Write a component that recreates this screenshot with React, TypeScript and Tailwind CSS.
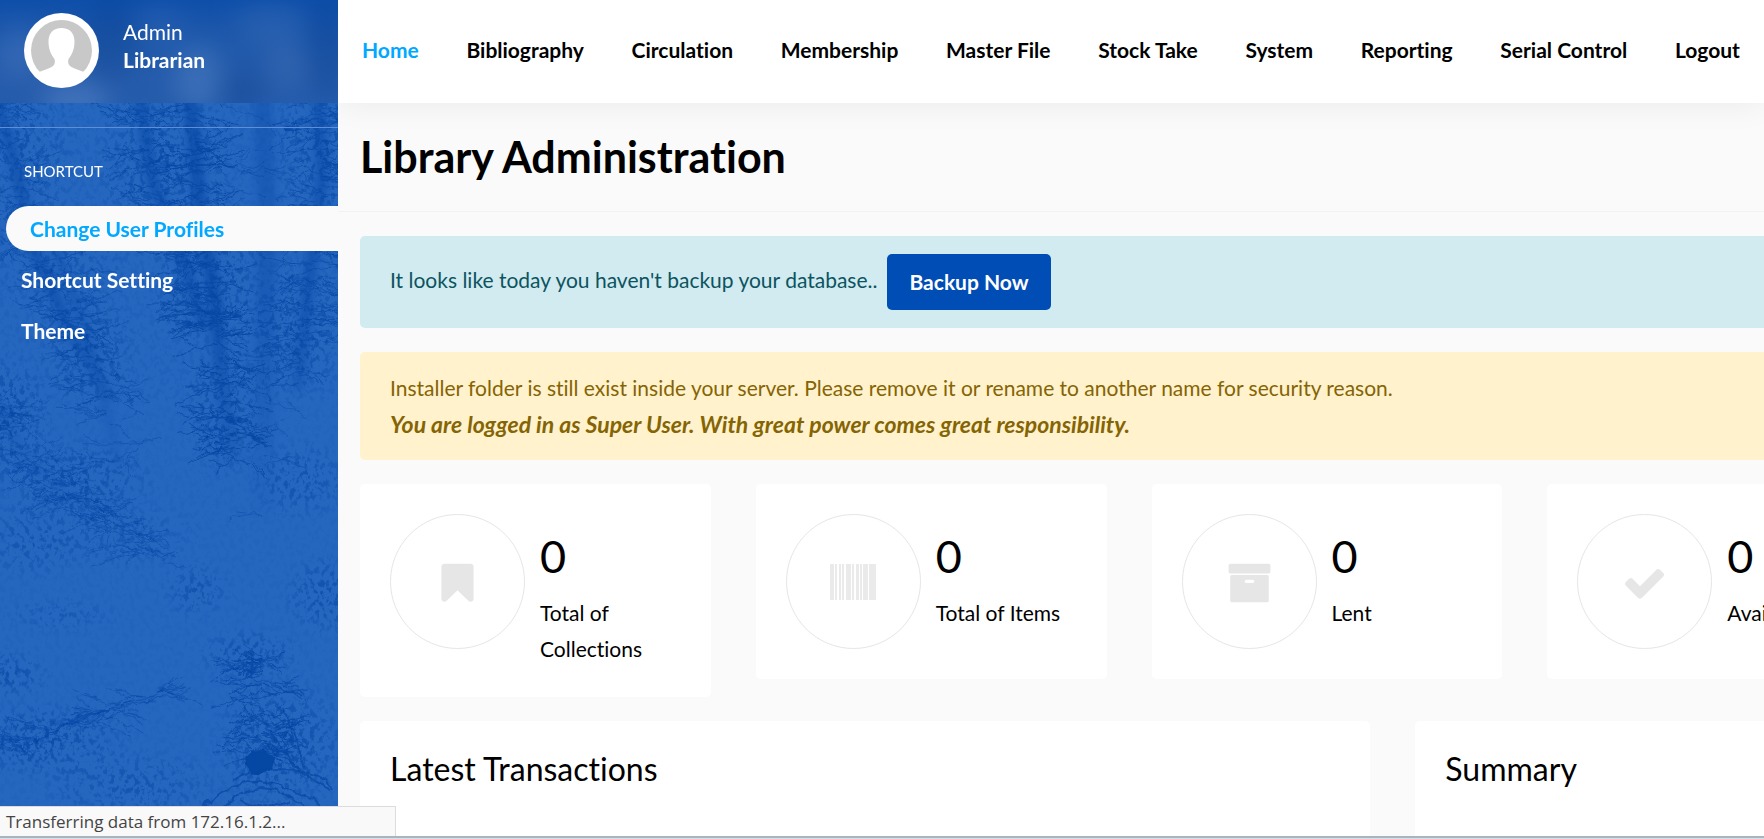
import React from "react";

type Point = [number, number];

function createRandom(seed: number) {
  let state = seed;
  return () => {
    state = (state * 1664525 + 1013904223) % 4294967296;
    return state / 4294967296;
  };
}

const random = createRandom(41);

const trunks: { points: Point[]; width: number; opacity: number; twigs: number }[] = [
  { points: [[-6, 90], [14, 160], [34, 250], [70, 330], [110, 400]], width: 12, opacity: 0.5, twigs: 60 },
  { points: [[40, 210], [75, 300], [95, 360], [120, 470]], width: 8, opacity: 0.4, twigs: 60 },
  { points: [[140, 95], [152, 180], [180, 250], [205, 330]], width: 12, opacity: 0.55, twigs: 70 },
  { points: [[190, 95], [200, 210], [215, 300], [222, 390], [234, 460]], width: 14, opacity: 0.65, twigs: 120 },
  { points: [[262, 95], [267, 220], [264, 380], [263, 520]], width: 18, opacity: 0.35, twigs: 30 },
  { points: [[318, 95], [322, 180], [308, 290], [298, 390]], width: 12, opacity: 0.5, twigs: 100 },
  { points: [[262, 655], [262, 690], [264, 730], [256, 760]], width: 7, opacity: 0.6, twigs: 60 },
  { points: [[-5, 400], [20, 450], [60, 490], [110, 520], [150, 560]], width: 10, opacity: 0.4, twigs: 90 },
  { points: [[-5, 750], [50, 730], [110, 710], [160, 690]], width: 6, opacity: 0.4, twigs: 60 },
];

const patches: [number, number, number, number, number][] = [
  [20, 150, 50, 70, 0.7],
  [165, 160, 60, 90, 0.75],
  [322, 150, 40, 80, 0.8],
  [60, 260, 60, 50, 0.5],
  [210, 270, 50, 70, 0.9],
  [295, 330, 45, 60, 0.9],
  [90, 350, 40, 50, 0.8],
  [5, 420, 42, 55, 1],
  [225, 410, 32, 60, 0.9],
  [75, 480, 70, 36, 0.85],
  [300, 480, 44, 34, 0.8],
  [120, 535, 70, 30, 0.5],
  [30, 540, 50, 34, 0.7],
  [196, 590, 30, 26, 0.7],
  [325, 595, 36, 36, 0.85],
  [60, 615, 50, 16, 0.5],
  [10, 675, 34, 22, 0.9],
  [250, 655, 46, 24, 0.85],
  [40, 740, 76, 34, 1],
  [280, 745, 58, 60, 1],
  [130, 785, 80, 32, 0.7],
];

function twigPath(x: number, y: number) {
  const side = random() > 0.5 ? 1 : -1;
  const length = 12 + random() * 40;
  const rise = (random() - 0.45) * 38;
  const middleX = x + side * length * 0.5;
  const middleY = y + rise * 0.2 - 5 + random() * 10;
  const endX = x + side * length;
  const endY = y + rise;
  const forkX = middleX + side * (5 + random() * 14);
  const forkY = middleY + (random() - 0.5) * 26;
  return `M${x.toFixed(1)} ${y.toFixed(1)}Q${middleX.toFixed(1)} ${middleY.toFixed(1)} ${endX.toFixed(1)} ${endY.toFixed(1)}M${middleX.toFixed(1)} ${middleY.toFixed(1)}L${forkX.toFixed(1)} ${forkY.toFixed(1)}`;
}

const twigs = trunks.map(({ points, twigs: count }) => {
  let path = "";
  for (let i = 0; i < count; i += 1) {
    const position = random() * (points.length - 1);
    const index = Math.floor(position);
    const t = position - index;
    const [ax, ay] = points[index];
    const [bx, by] = points[index + 1];
    path += twigPath(ax + (bx - ax) * t, ay + (by - ay) * t);
  }
  return path;
});

function Forest() {
  return (
    <svg
      aria-hidden="true"
      className="absolute inset-0 h-full w-full"
      viewBox="0 0 338 839"
      preserveAspectRatio="xMidYMin slice"
    >
      <defs>
        <filter id="foliage" x="0" y="0" width="100%" height="100%" colorInterpolationFilters="sRGB">
          <feTurbulence type="fractalNoise" baseFrequency="0.2 0.16" numOctaves="5" seed="8" />
          <feColorMatrix values="0 0 0 0 0.01  0 0 0 0 0.27  0 0 0 0 0.63  5 4 0 0 -4.5" />
          <feComposite operator="in" in2="SourceGraphic" />
        </filter>
        <filter id="rough" x="-5%" y="-5%" width="110%" height="110%" colorInterpolationFilters="sRGB">
          <feTurbulence type="fractalNoise" baseFrequency="0.1" numOctaves="2" seed="3" />
          <feDisplacementMap in="SourceGraphic" scale="8" xChannelSelector="R" yChannelSelector="G" />
        </filter>
        <filter id="soft" x="-5%" y="-5%" width="110%" height="110%" colorInterpolationFilters="sRGB">
          <feGaussianBlur stdDeviation="3" />
        </filter>
        <linearGradient id="fade" gradientUnits="userSpaceOnUse" x1="0" y1="80" x2="0" y2="520">
          <stop offset="0" stopColor="#fff" />
          <stop offset="0.5" stopColor="#fff" />
          <stop offset="1" stopColor="#000" />
        </linearGradient>
        <mask id="canopy">
          <rect width="338" height="839" fill="url(#fade)" />
        </mask>
        <radialGradient id="patch">
          <stop offset="0" stopColor="#000" stopOpacity="1" />
          <stop offset="0.5" stopColor="#000" stopOpacity="0.6" />
          <stop offset="1" stopColor="#000" stopOpacity="0" />
        </radialGradient>
      </defs>
      <rect width="338" height="839" fill="#2566bf" />
      <g filter="url(#foliage)" opacity="0.75">
        <rect width="338" height="839" opacity="0.08" />
        <rect width="338" height="400" opacity="0.1" />
        {patches.map(([cx, cy, rx, ry, opacity]) => (
          <ellipse key={`${cx}-${cy}`} cx={cx} cy={cy} rx={rx * 1.25} ry={ry * 1.25} fill="url(#patch)" opacity={opacity} />
        ))}
      </g>
      <g mask="url(#canopy)">
        <g filter="url(#soft)" fill="none" stroke="#0648a5">
          {trunks.map(({ points, width, opacity }, index) => (
            <polyline key={index} points={points.join(" ")} strokeWidth={width} opacity={opacity} />
          ))}
        </g>
      </g>
      <g filter="url(#rough)" fill="none" stroke="#0646a3">
        {twigs.map((path, index) => (
          <path key={index} d={path} strokeWidth="1" opacity={trunks[index].opacity * 1.2} />
        ))}
        <ellipse cx="260" cy="762" rx="15" ry="11" fill="#0448a4" />
        <path
          d="M200 810q30-30 60-28t76 32M212 816q30-28 50-28t60 32M232 780q24-14 60-10t40 20M284 710q14 30 20 60M270 730q20 40 60 60M240 800q24 10 50 2"
          strokeWidth="2"
          opacity="0.7"
        />
      </g>
    </svg>
  );
}

function HeaderHaze() {
  return (
    <svg aria-hidden="true" className="absolute inset-0 h-full w-full" viewBox="0 0 338 103" preserveAspectRatio="none">
      <defs>
        <filter id="haze" x="-20%" y="-20%" width="140%" height="140%" colorInterpolationFilters="sRGB">
          <feGaussianBlur stdDeviation="12" />
        </filter>
        <linearGradient id="haze-veil" x2="0" y2="1">
          <stop offset="0" stopColor="#0046a5" stopOpacity="0.4" />
          <stop offset="1" stopColor="#6f83a5" stopOpacity="0.15" />
        </linearGradient>
      </defs>
      <rect width="338" height="103" fill="#1855ad" />
      <g filter="url(#haze)">
        <ellipse cx="20" cy="50" rx="24" ry="26" fill="#2f67b9" />
        <ellipse cx="75" cy="100" rx="34" ry="18" fill="#3a70bf" />
        <ellipse cx="160" cy="22" rx="24" ry="20" fill="#265fb3" />
        <ellipse cx="198" cy="76" rx="24" ry="34" fill="#326bbb" />
        <ellipse cx="270" cy="22" rx="34" ry="22" fill="#2b63b4" />
        <ellipse cx="288" cy="62" rx="20" ry="22" fill="#2860b2" />
        <ellipse cx="110" cy="40" rx="26" ry="40" fill="#0f4a9f" />
        <ellipse cx="242" cy="90" rx="22" ry="20" fill="#0d489e" />
        <ellipse cx="326" cy="50" rx="18" ry="50" fill="#0c489f" />
      </g>
      <rect width="338" height="103" fill="url(#haze-veil)" />
    </svg>
  );
}

function Avatar() {
  return (
    <svg aria-hidden="true" className="size-[75px] shrink-0" viewBox="0 0 75 75">
      <circle cx="37.5" cy="37.5" r="37.5" fill="#fff" />
      <circle cx="37.5" cy="37.5" r="30.5" fill="#c8c8c8" />
      <path
        d="M37.500 15c8 0 13 5 13 13.500 0 8-2.500 13-6 17.500-1 4 0 6 3 8 3 2 8 3 12.500 5A30.500 30.500 0 0 1 15 59c4.500-2 9.500-3 12.500-5 3-2 4-4 3-8-3.500-4.500-6-9.500-6-17.500C24.500 20 29.500 15 37.500 15z"
        fill="#fff"
      />
    </svg>
  );
}

function BookmarkIcon() {
  return (
    <svg aria-hidden="true" className="h-[45px] w-[33px]" viewBox="0 -62 1280 1792" fill="currentColor">
      <path d="M1164 128q23 0 44 9 33 13 52.500 41t19.500 62v1289q0 34-19.500 62t-52.500 41q-19 8-44 8-48 0-83-32l-441-424-441 424q-36 33-83 33-23 0-44-9-33-13-52.500-41t-19.500-62v-1289q0-34 19.500-62t52.500-41q21-9 44-9h1048z" />
    </svg>
  );
}

const bars: Point[] = [
  [0, 4], [5, 2], [9, 2], [12, 2], [16, 5], [22, 2], [26, 3], [30, 2], [33, 5], [39, 7],
];

function BarcodeIcon() {
  return (
    <svg aria-hidden="true" className="h-[36px] w-[46px] opacity-80" viewBox="0 0 46 36" fill="currentColor">
      {bars.map(([x, width]) => (
        <rect key={x} x={x} y="0" width={width} height="36" />
      ))}
    </svg>
  );
}

function ArchiveIcon() {
  return (
    <svg aria-hidden="true" className="size-[45px]" viewBox="0 -62 1792 1792" fill="currentColor">
      <path d="M1088 832q0-26-19-45t-45-19h-256q-26 0-45 19t-19 45 19 45 45 19h256q26 0 45-19t19-45zm576-192v960q0 26-19 45t-45 19h-1408q-26 0-45-19t-19-45v-960q0-26 19-45t45-19h1408q26 0 45 19t19 45zm64-448v256q0 26-19 45t-45 19h-1536q-26 0-45-19t-19-45v-256q0-26 19-45t45-19h1536q26 0 45 19t19 45z" />
    </svg>
  );
}

function CheckIcon() {
  return (
    <svg aria-hidden="true" className="size-[45px]" viewBox="0 -62 1792 1792" fill="currentColor">
      <path d="M1671 566q0 40-28 68l-724 724-136 136q-28 28-68 28t-68-28l-136-136-362-362q-28-28-28-68t28-68l136-136q28-28 68-28t68 28l294 295 656-657q28-28 68-28t68 28l136 136q28 28 28 68z" />
    </svg>
  );
}

const menu = [
  "Home",
  "Bibliography",
  "Circulation",
  "Membership",
  "Master File",
  "Stock Take",
  "System",
  "Reporting",
  "Serial Control",
  "Logout",
];

const stats = [
  { label: "Total of Collections", value: 0, Icon: BookmarkIcon },
  { label: "Total of Items", value: 0, Icon: BarcodeIcon },
  { label: "Lent", value: 0, Icon: ArchiveIcon },
  { label: "Available", value: 0, Icon: CheckIcon },
];

function Sidebar() {
  return (
    <aside className="relative w-[338px] shrink-0 overflow-hidden bg-[#2566bf] text-white">
      <Forest />
      <div className="relative">
        <div className="relative h-[103px]">
          <HeaderHaze />
          <div className="relative flex h-full items-start gap-6 px-6 pt-[13px]">
            <Avatar />
            <div className="pt-[5px] leading-7">
              <div>Admin</div>
              <div className="font-bold">Librarian</div>
            </div>
          </div>
        </div>
        <div className="mt-6 border-t border-[#5d8fd6]" />
        <h2 className="mt-[31px] px-6 text-[15px] leading-6">SHORTCUT</h2>
        <ul className="mt-[23px] flex flex-col gap-[6px] font-bold leading-[45px]">
          <li>
            <a href="#profiles" className="ml-[6px] block rounded-l-full bg-[#fafafa] pl-6 text-[#00a8ff]">
              Change User Profiles
            </a>
          </li>
          <li>
            <a href="#shortcut" className="block px-[21px]">Shortcut Setting</a>
          </li>
          <li>
            <a href="#theme" className="block px-[21px]">Theme</a>
          </li>
        </ul>
      </div>
    </aside>
  );
}

export default function App() {
  return (
    <div className="relative flex h-screen overflow-hidden bg-[#fafafa] font-[Lato,sans-serif] text-[21px] leading-9 text-black [font-variant-ligatures:none]">
      <Sidebar />
      <div className="min-w-0 flex-1 overflow-hidden">
        <header className="relative h-[103px] bg-white shadow-[0_0_32px_rgba(0,0,0,0.07)]">
          <nav className="flex h-full items-center justify-between px-6 pb-1 font-bold">
            {menu.map((item, index) => (
              <a key={item} href={`#menu-${index}`} className={index === 0 ? "text-[#00a8ff]" : "text-black"}>
                {item}
              </a>
            ))}
          </nav>
        </header>
        <main className="min-w-[1582px]">
          <div className="flex h-[109px] items-center border-b border-[#f2f2f2] px-[22px]">
            <h1 className="text-[43px] font-bold leading-[48px]">Library Administration</h1>
          </div>
          <div className="flex flex-col gap-6 px-[22px] pt-6">
            <div className="flex items-center gap-[10px] rounded-[5px] bg-[#d1ebf0] px-[30px] py-[18px] text-[#0c5460]">
              <p className="pb-1">It looks like today you haven't backup your database..</p>
              <button className="h-14 rounded-[5px] bg-[#004db6] px-[22px] font-bold text-white">Backup Now</button>
            </div>
            <div className="rounded-[5px] bg-[#fff2cd] px-[30px] py-[18px] text-[#856404]">
              <p>
                Installer folder is still exist inside your server. Please remove it or rename to another name for
                security reason.
              </p>
              <p className="text-[23px] font-bold italic leading-9">
                You are logged in as Super User. With great power comes great responsibility.
              </p>
            </div>
            <div className="grid grid-cols-4 items-start gap-[45px]">
              {stats.map(({ label, value, Icon }) => (
                <section key={label} className="flex gap-[15px] rounded-[5px] bg-white p-[30px]">
                  <div className="flex size-[135px] shrink-0 items-center justify-center rounded-full border border-[#e6e6e6] text-[#e6e6e6]">
                    <Icon />
                  </div>
                  <div className="min-w-0 flex-1 pt-[15px]">
                    <div className="mb-3 text-[45px] leading-[54px]">{value}</div>
                    <div>{label}</div>
                  </div>
                </section>
              ))}
            </div>
            <div className="grid grid-cols-3 gap-[45px]">
              <section className="col-span-2 h-40 rounded-[5px] bg-white p-[30px]">
                <h2 className="text-[32px] leading-9">Latest Transactions</h2>
              </section>
              <section className="rounded-[5px] bg-white p-[30px]">
                <h2 className="text-[32px] leading-9">Summary</h2>
              </section>
            </div>
          </div>
        </main>
      </div>
      <div className="absolute inset-x-0 bottom-0">
        <div className="h-[30px] w-[396px] border-r border-t border-[#dcdcdc] bg-[#f9f9f9] pl-[6px] font-['Open_Sans',sans-serif] text-[17px] leading-[30px] text-[#444]">
          Transferring data from 172.16.1.2...
        </div>
        <div className="h-[3px] border-b border-[#d5dfe8] bg-[#abb4be]" />
      </div>
    </div>
  );
}
